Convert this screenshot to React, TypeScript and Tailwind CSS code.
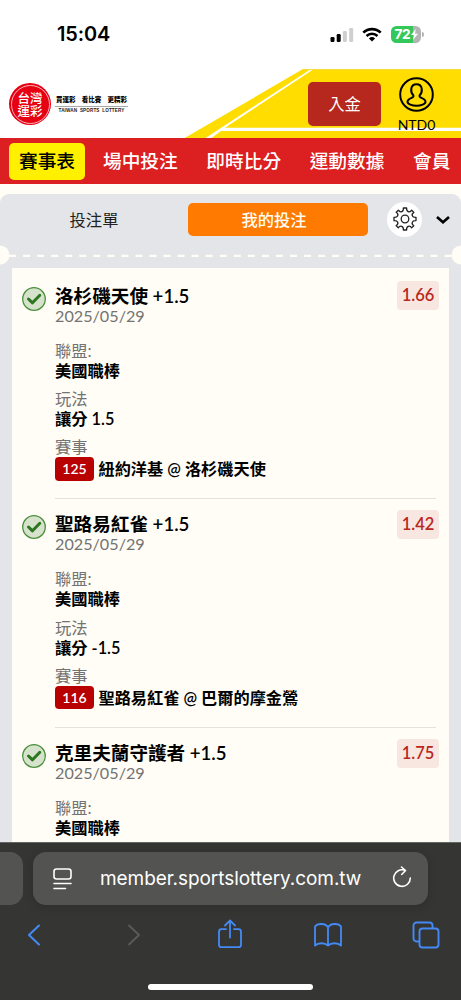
import type { ReactNode } from 'react';

type Bet = {
  team: string;
  odds: string;
  play?: string;
  game?: { code: string; away: string; home: string };
};

const tabs = ['場中投注', '即時比分', '運動數據', '會員'];

const bets: Bet[] = [
  {
    team: '洛杉磯天使 +1.5',
    odds: '1.66',
    play: '讓分 1.5',
    game: { code: '125', away: '紐約洋基', home: '洛杉磯天使' },
  },
  {
    team: '聖路易紅雀 +1.5',
    odds: '1.42',
    play: '讓分 -1.5',
    game: { code: '116', away: '聖路易紅雀', home: '巴爾的摩金鶯' },
  },
  { team: '克里夫蘭守護者 +1.5', odds: '1.75' },
];

function StatusBar() {
  return (
    <div className="flex h-[69px] shrink-0 items-center bg-white pl-[57px] pr-[40px] font-['Inter']">
      <span className="mt-px text-[19.9px] font-semibold leading-none tracking-[-0.1px] text-black">15:04</span>
      <svg className="ml-auto" width="24" height="16" viewBox="0 0 24 16">
        <rect x="0.5" y="10" width="4" height="5" rx="1.2" fill="#000" />
        <rect x="6.7" y="7" width="4" height="8" rx="1.2" fill="#000" />
        <rect x="12.9" y="4" width="4" height="11" rx="1.2" fill="#cfcfcf" />
        <rect x="19.2" y="1" width="4" height="14" rx="1.2" fill="#cfcfcf" />
      </svg>
      <svg className="ml-[8px]" width="20" height="15" viewBox="0 0 20 15" fill="none" stroke="#000">
        <path d="M1.3 5.6a12.5 12.5 0 0 1 17.4 0" strokeWidth="2.7" />
        <path d="M4.5 9a8 8 0 0 1 11 0" strokeWidth="2.5" />
        <path d="M10 14.6 6.9 11.5a4.5 4.5 0 0 1 6.2 0z" fill="#000" stroke="none" />
      </svg>
      <div className="relative ml-[9px] flex h-[17px] w-[30px] items-center rounded-[5.5px] bg-linear-to-r from-[#34c759] from-72% to-[#b4b4b4] to-72%">
        <span className="pl-[3.5px] text-[13.8px] font-bold leading-none tracking-[-0.4px] text-white">72</span>
        <svg className="absolute left-[20px] top-[3px]" width="7" height="11" viewBox="0 0 7 11">
          <path d="M4.8 0 0 6h3L2 11l5-6.3H4z" fill="#fff" />
        </svg>
        <span className="absolute -right-[3px] top-[6px] h-[5px] w-[2px] rounded-r-full bg-[#b4b4b4]" />
      </div>
    </div>
  );
}

function Logo() {
  return (
    <div className="flex items-center">
      <div className="flex h-[42px] w-[42px] items-center justify-center rounded-full bg-[#e60012]">
        <div className="flex h-[39px] w-[39px] flex-col items-center justify-center rounded-full border border-[#f8b8bb] pt-[3px] text-[12.5px] font-medium leading-[12.5px] text-white">
          <span>台灣</span>
          <span>運彩</span>
        </div>
      </div>
      <div className="ml-[4px] mt-[1px] w-[73px] whitespace-nowrap">
        <div className="flex justify-between border-b border-[#a8a8a8] px-[1px] pb-[2px] text-[6.5px] font-black leading-[8px] text-black">
          <span>買運彩</span>
          <span>看比賽</span>
          <span>更精彩</span>
        </div>
        <div className="pt-[1px] text-center font-['Liberation_Sans'] text-[4.6px] font-bold leading-[6px] tracking-[0.12px] text-[#222]">
          TAIWAN&nbsp; SPORTS&nbsp; LOTTERY
        </div>
      </div>
    </div>
  );
}

function Header() {
  return (
    <header className="relative flex h-[69.3px] shrink-0 items-start bg-white pl-[9px] pr-[26px]">
      <svg className="absolute inset-0" width="461" height="69.3" viewBox="0 0 461 69.3">
        <path d="M303 0h8L204 70h-21z" fill="#ffdd00" />
        <path d="M314 0h147v58.7H225zM221 62h240v8H210z" fill="#ffdd00" />
        <path d="M303 .5h158" stroke="#f5dc3c" />
      </svg>
      <div className="relative mt-[14px]">
        <Logo />
      </div>
      <button className="relative ml-auto mt-[12.5px] h-[44.5px] w-[73px] rounded-[5px] bg-[#b6271d] text-[16.3px] text-white">
        入金
      </button>
      <div className="relative ml-[13px] mr-[-4px] flex w-[45px] flex-col items-center pt-[8px]">
        <svg width="35" height="35" viewBox="0 0 35 35" fill="none" stroke="#000" strokeWidth="2">
          <circle cx="17.5" cy="17.5" r="16.3" />
          <path d="M14.3 18.2c-3-3-3.4-11 3.2-11s6.2 8 3.2 11c-.5 1.2 0 1.9 1 2.3 3 1.3 4.8 2 4.8 4.2 0 2.5-4.6 4.1-9 4.1s-9-1.6-9-4.1c0-2.200 1.800-2.900 4.800-4.200 1-.4 1.500-1.100 1-2.300z" />
        </svg>
        <span className="mt-[5px] text-[14px] leading-[16px] text-black">NTD0</span>
      </div>
    </header>
  );
}

function NavBar() {
  return (
    <nav className="flex h-[46px] shrink-0 items-center overflow-hidden whitespace-nowrap bg-[#dc1f20] pl-[9px] text-[18.7px] font-medium text-white">
      <span className="flex h-[37px] w-[76px] shrink-0 items-center justify-center rounded-[5px] bg-[#fff000] text-black">賽事表</span>
      <div className="ml-[18px] flex gap-[28.6px]">
        {tabs.map((tab) => (
          <span key={tab}>{tab}</span>
        ))}
      </div>
    </nav>
  );
}

function SlipTabs() {
  return (
    <div className="relative h-[74.5px] shrink-0">
      <div className="flex items-start pt-[9px]">
        <span className="w-[188px] text-center text-[16.3px] leading-[33px] text-[#222]">投注單</span>
        <span className="w-[180px] rounded-[5px] bg-[#ff7a00] pr-[8px] text-center text-[16.3px] font-medium leading-[33px] text-[#fffdf5]">
          我的投注
        </span>
        <span className="-mt-[1px] ml-[19px] flex h-[35px] w-[35px] items-center justify-center rounded-full bg-white">
          <Gear />
        </span>
        <svg className="ml-[13px] mt-[12px]" width="16" height="10" viewBox="0 0 16 10" fill="none" stroke="#000" strokeWidth="2.6">
          <path d="M2 2l6 5.3L14 2" />
        </svg>
      </div>
      {/* ticket perforation */}
      <svg className="absolute left-0 top-[51px]" width="461" height="20" viewBox="0 0 461 20" fill="#fffdf5">
        <path d="M9 10.8h443" stroke="#fffdf5" strokeWidth="2.2" strokeDasharray="7 7.05" />
        <circle cx="0" cy="10" r="9.5" />
        <circle cx="461" cy="10" r="9.5" />
      </svg>
    </div>
  );
}

function Gear() {
  return (
    <svg width="24" height="24" viewBox="0 0 24 24" fill="none" stroke="#222" strokeWidth="1.3" strokeLinejoin="round">
      <path d="M10.4 1h3.2q-.2 3 1.700 3.700 2 .8 3.400-1.500l2.200 2.200q-2.400 1.400-1.600 3.400.7 1.800 3.700 1.600v3.200q-3-.2-3.700 1.700-.8 2 1.500 3.400l-2.200 2.200q-1.400-2.400-3.400-1.600-1.800.7-1.600 3.700h-3.200q.2-3-1.700-3.700-2-.8-3.400 1.500l-2.200-2.200q2.400-1.400 1.600-3.400Q4 13.400 1 13.600v-3.200q3 .2 3.700-1.700.8-2-1.500-3.400l2.200-2.200q1.400 2.400 3.400 1.600 1.800-.7 1.600-3.700z" />
      <circle cx="12" cy="12" r="3.8" />
    </svg>
  );
}

function Field({ label, children }: { label: string; children: ReactNode }) {
  return (
    <div className="mb-[8.3px] text-[16.3px] leading-[20px]">
      <div className="text-[#737373]">{label}</div>
      <div className="font-semibold text-black">{children}</div>
    </div>
  );
}

function BetItem({ bet }: { bet: Bet }) {
  return (
    <li className="flex h-[228.8px] items-start pt-[14px]">
      <svg className="mt-px" width="24" height="24" viewBox="0 0 24 24" fill="none">
        <circle cx="12" cy="12" r="11.3" fill="#d6e2cc" stroke="#4a8f3c" strokeWidth="1.3" />
        <path d="M6.5 12l4 3.8 7.3-7.5" stroke="#2c761f" strokeWidth="3" strokeLinecap="round" strokeLinejoin="round" />
      </svg>
      <div className="relative ml-[9px] h-full w-[381px] whitespace-nowrap">
        <div className="text-[18.6px] font-semibold leading-[20px] text-black">{bet.team}</div>
        <div className="mb-[15px] text-[16.2px] leading-[19px] text-[#737373]">2025/05/29</div>
        <div className="pt-px">
          <Field label="聯盟:">美國職棒</Field>
        </div>
        {bet.play && <Field label="玩法">{bet.play}</Field>}
        {bet.game && (
          <>
            <div className="text-[16.3px] leading-[20px] text-[#737373]">賽事</div>
            <div className="flex items-center">
              <span className="h-[23.5px] w-[39px] rounded-[4px] bg-[#b80000] text-center text-[14px] font-semibold leading-[23.5px] text-white">
                {bet.game.code}
              </span>
              <span className="ml-[4.5px] text-[16.2px] font-semibold leading-[23.5px] text-black">
                {bet.game.away} @ {bet.game.home}
              </span>
            </div>
            <div className="mt-[17.7px] h-px bg-[#e4e2dc]" />
          </>
        )}
        <span className="absolute -right-[3px] -top-[4.500px] h-[29px] w-[42px] rounded-[4px] bg-[#f8e7e0] text-center text-[16.5px] font-semibold leading-[29px] text-[#b9271e]">
          {bet.odds}
        </span>
      </div>
    </li>
  );
}

function BrowserBar() {
  return (
    <footer className="h-[158px] shrink-0 overflow-hidden border-t border-[#626660] bg-[#353533] pt-[9px]">
      <div className="flex">
        <div className="h-[53px] w-[23px] shrink-0 rounded-r-[13px] bg-[#535351]" />
        <div className="ml-[10px] flex h-[53px] w-[395px] items-center rounded-[13px] bg-[#535351] pl-[20px] pr-[16px] shadow-[0_2px_10px_rgba(0,0,0,0.15)]">
          <svg width="19" height="22" viewBox="0 0 19 22" fill="none" stroke="#fff" strokeWidth="1.6" strokeLinecap="round">
            <rect x="1" y="1" width="17" height="10" rx="2.5" />
            <path d="M1 15.5h17M1 20.5h11.5" />
          </svg>
          <span className="ml-[28px] mt-[2px] flex-1 font-['Inter'] text-[19px] tracking-[-0.07px] text-white">
            member.sportslottery.com.tw
          </span>
          <svg className="-mt-[3px]" width="20" height="22" viewBox="0 0 20 22" fill="none" stroke="#fff" strokeWidth="1.6" strokeLinecap="round" strokeLinejoin="round">
            <path d="M13 4.3A8.3 8.3 0 1 0 18.300 12M9.500 1l4 3.500-3.800 4" />
          </svg>
        </div>
      </div>
      <div className="mt-[14px] flex h-[32px] items-center pl-[27px]">
        <svg width="14" height="22" viewBox="0 0 14 22" fill="none" stroke="#438af5" strokeWidth="2" strokeLinecap="round" strokeLinejoin="round">
          <path d="M12 1.5 2 11l10 9.5" />
        </svg>
        <svg className="ml-[86px]" width="14" height="22" viewBox="0 0 14 22" fill="none" stroke="#5b5b59" strokeWidth="1.8" strokeLinecap="round" strokeLinejoin="round">
          <path d="M2 1.5 12 11 2 20.5" />
        </svg>
        <svg className="-mt-[2px] ml-[76px]" width="26" height="30" viewBox="0 0 26 30" fill="none" stroke="#438af5" strokeWidth="1.8" strokeLinecap="round" strokeLinejoin="round">
          <path d="M9 10.2H4.5a2.500 2.500 0 0 0-2.500 2.500v13a2.500 2.500 0 0 0 2.500 2.500h17a2.500 2.500 0 0 0 2.500-2.500v-13a2.500 2.500 0 0 0-2.500-2.500H17M13 18.500V2M8 6.500 13 1.500l5 5" />
        </svg>
        <svg className="ml-[70px]" width="30" height="26" viewBox="0 0 30 26" fill="none" stroke="#438af5" strokeWidth="1.8" strokeLinejoin="round">
          <path d="M15 5.5C12.5 1 4.500 1 2 4.500v19c3-3 10-3 13 0 3-3 10-3 13 0v-19c-2.500-3.500-10.500-3.500-13 1zV23.500" />
        </svg>
        <svg className="ml-[69px]" width="28" height="28" viewBox="0 0 28 28" fill="none" stroke="#438af5" strokeWidth="1.9" strokeLinejoin="round">
          <path d="M7.5 20.5H4.500a3 3 0 0 1-3-3v-13a3 3 0 0 1 3-3h13a3 3 0 0 1 3 3v2.500" />
          <rect x="7.5" y="7.5" width="19" height="19" rx="3" />
        </svg>
      </div>
      <div className="mx-auto mt-[33px] h-[6px] w-[165px] rounded-full bg-white" />
    </footer>
  );
}

export default function App() {
  return (
    <div className="flex h-[1000px] w-[461px] flex-col overflow-hidden bg-[#fffdf5] font-[Lato,'Noto_Sans_CJK_TC',sans-serif]">
      <StatusBar />
      <Header />
      <NavBar />
      <main className="mt-[9.4px] flex min-h-0 flex-1 flex-col overflow-hidden rounded-t-[9px] bg-[#e4e5e8]">
        <SlipTabs />
        <ul className="mx-[12px] w-[437px] bg-[#fffdf5] pl-[10px] pt-[3.4px]">
          {bets.map((bet) => (
            <BetItem key={bet.team} bet={bet} />
          ))}
        </ul>
      </main>
      <BrowserBar />
    </div>
  );
}
